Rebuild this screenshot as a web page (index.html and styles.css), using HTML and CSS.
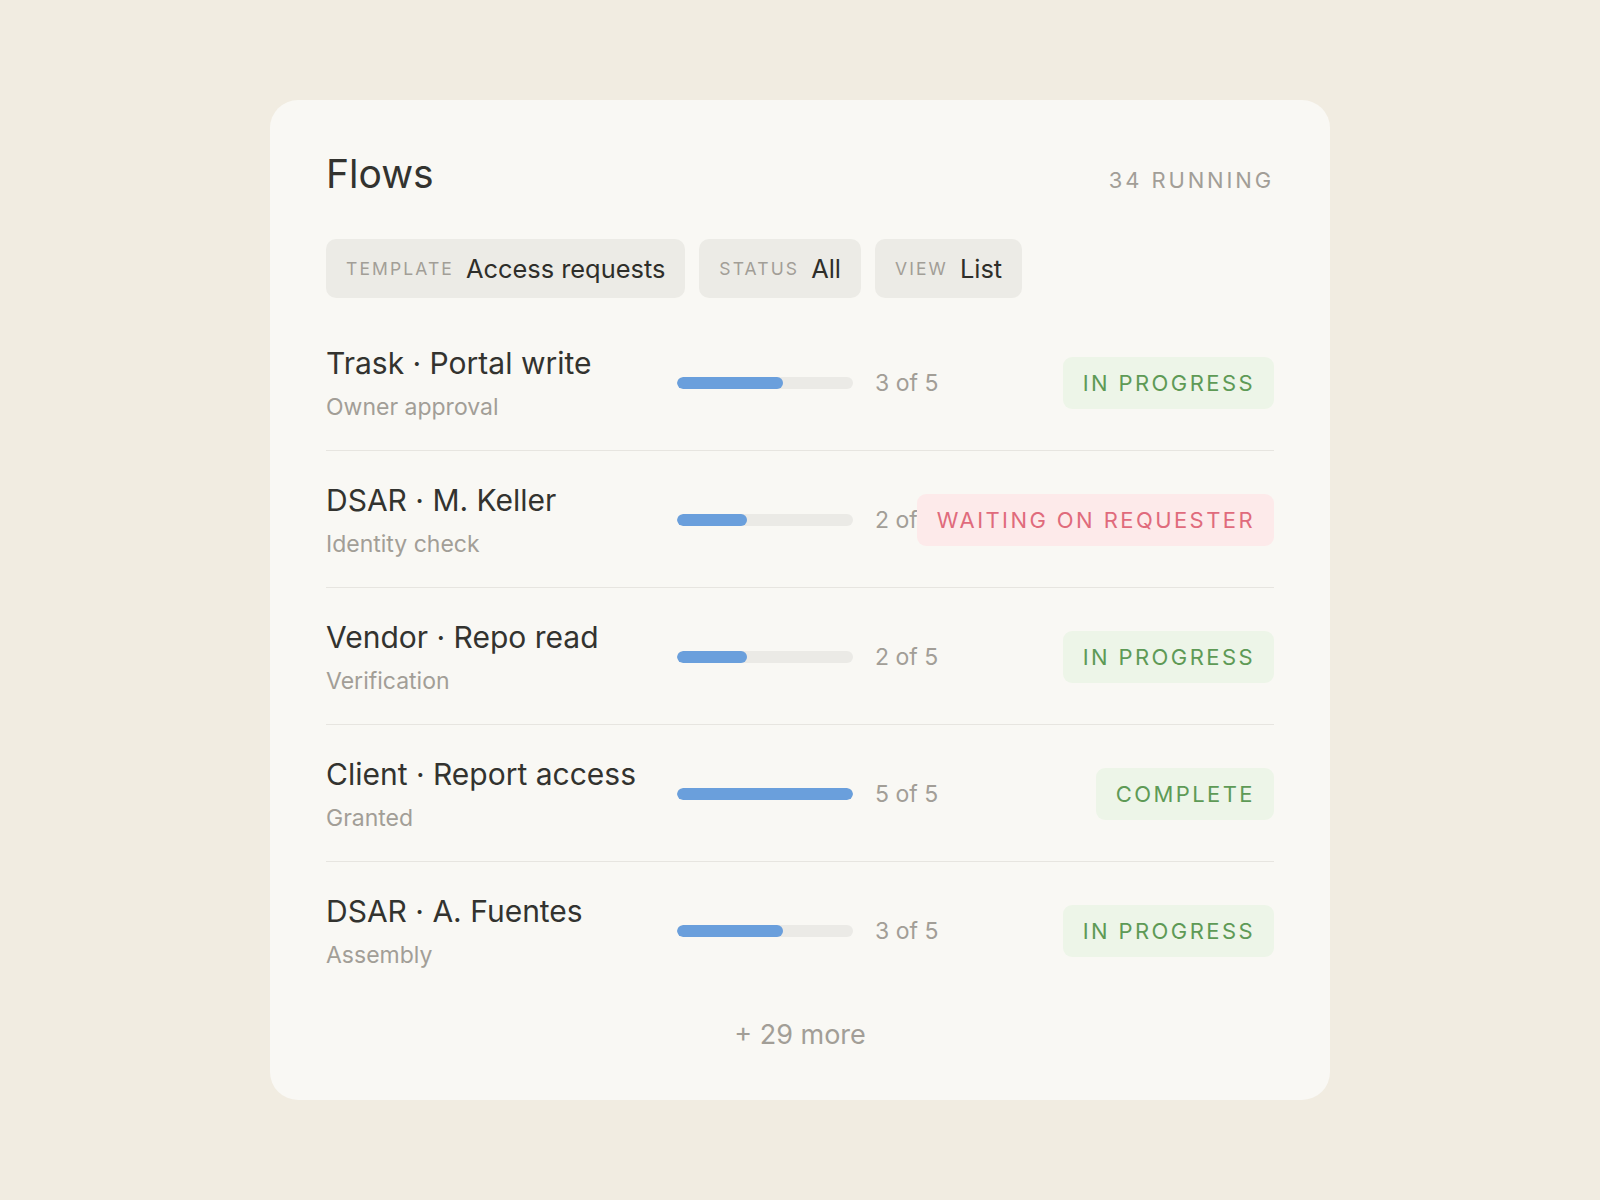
FILE: index.html
```html
<!DOCTYPE html>
<html lang="en">
<head>
<meta charset="utf-8">
<title>Flows</title>
<link rel="stylesheet" href="styles.css">
</head>
<body>
<main class="card">
  <header class="head">
    <h1 class="title">Flows</h1>
    <span class="running">34 running</span>
  </header>
  <div class="filters">
    <div class="chip"><span class="chip-label">Template</span><span class="chip-value">Access requests</span></div>
    <div class="chip"><span class="chip-label">Status</span><span class="chip-value">All</span></div>
    <div class="chip"><span class="chip-label">View</span><span class="chip-value">List</span></div>
  </div>
  <ul class="list">
    <li class="row">
      <div class="info"><div class="name">Trask · Portal write</div><div class="step">Owner approval</div></div>
      <div class="bar"><div class="fill" style="width:60%"></div></div>
      <div class="count">3 of 5</div>
      <div class="status"><span class="badge ok">In progress</span></div>
    </li>
    <li class="row">
      <div class="info"><div class="name">DSAR · M. Keller</div><div class="step">Identity check</div></div>
      <div class="bar"><div class="fill" style="width:40%"></div></div>
      <div class="count">2 of 5</div>
      <div class="status"><span class="badge warn">Waiting on requester</span></div>
    </li>
    <li class="row">
      <div class="info"><div class="name">Vendor · Repo read</div><div class="step">Verification</div></div>
      <div class="bar"><div class="fill" style="width:40%"></div></div>
      <div class="count">2 of 5</div>
      <div class="status"><span class="badge ok">In progress</span></div>
    </li>
    <li class="row">
      <div class="info"><div class="name">Client · Report access</div><div class="step">Granted</div></div>
      <div class="bar"><div class="fill" style="width:100%"></div></div>
      <div class="count">5 of 5</div>
      <div class="status"><span class="badge ok">Complete</span></div>
    </li>
    <li class="row">
      <div class="info"><div class="name">DSAR · A. Fuentes</div><div class="step">Assembly</div></div>
      <div class="bar"><div class="fill" style="width:60%"></div></div>
      <div class="count">3 of 5</div>
      <div class="status"><span class="badge ok">In progress</span></div>
    </li>
  </ul>
  <div class="more">+ 29 more</div>
</main>
</body>
</html>
```

FILE: styles.css
```css
* { box-sizing: border-box; }

html, body {
  margin: 0;
  padding: 0;
}

body {
  background: #f1ece1;
  font-family: Inter, "Liberation Sans", sans-serif;
  color: #33332f;
  padding-top: 100px;
}

.card {
  width: 1060px;
  margin: 0 auto;
  background: #f9f8f4;
  border-radius: 28px;
  padding: 49px 56px 49px;
}

.head {
  display: flex;
  justify-content: space-between;
  align-items: baseline;
}

.title {
  margin: 0;
  font-size: 39px;
  line-height: 50px;
  font-weight: 400;
  color: #33332f;
}

.running {
  font-size: 22px;
  letter-spacing: 0.13em;
  text-transform: uppercase;
  color: #a29e97;
}

.filters {
  display: flex;
  gap: 14px;
  margin-top: 40px;
}

.chip {
  display: flex;
  align-items: center;
  gap: 12px;
  height: 59px;
  padding: 0 20px;
  border-radius: 10px;
  background: #ecebe6;
}

.chip-label {
  font-size: 17.5px;
  letter-spacing: 0.12em;
  text-transform: uppercase;
  color: #a29e97;
}

.chip-value {
  font-size: 25.4px;
  color: #2e2e2a;
}

.list {
  list-style: none;
  margin: 16px 0 0;
  padding: 0;
}

.row {
  display: grid;
  grid-template-columns: 329px 176px 1fr 212px;
  column-gap: 22px;
  align-items: center;
  padding: 31px 0 29px;
  border-bottom: 1px solid #e7e5e0;
}

.row:last-child {
  border-bottom: none;
}

.name {
  font-size: 30px;
  line-height: 36px;
  color: #33332f;
  white-space: nowrap;
}

.step {
  margin-top: 12px;
  font-size: 23px;
  line-height: 28px;
  color: #a29e97;
}

.bar {
  height: 12px;
  border-radius: 6px;
  background: #ebeae6;
  overflow: hidden;
}

.fill {
  height: 100%;
  border-radius: 6px;
  background: #6a9fdc;
}

.count {
  font-size: 23px;
  color: #a29e97;
  white-space: nowrap;
}

.status {
  display: flex;
  justify-content: flex-end;
}

.badge {
  flex-shrink: 0;
  display: flex;
  align-items: center;
  height: 52px;
  padding: 0 19px 0 20px;
  border-radius: 9px;
  font-size: 22px;
  letter-spacing: 0.11em;
  text-transform: uppercase;
  white-space: nowrap;
}

.badge.ok {
  background: #edf5e8;
  color: #5e9a56;
}

.badge.warn {
  background: #fdeaea;
  color: #e06b7c;
}

.more {
  margin-top: 21px;
  text-align: center;
  font-size: 27px;
  line-height: 32px;
  color: #a29e97;
}
```
